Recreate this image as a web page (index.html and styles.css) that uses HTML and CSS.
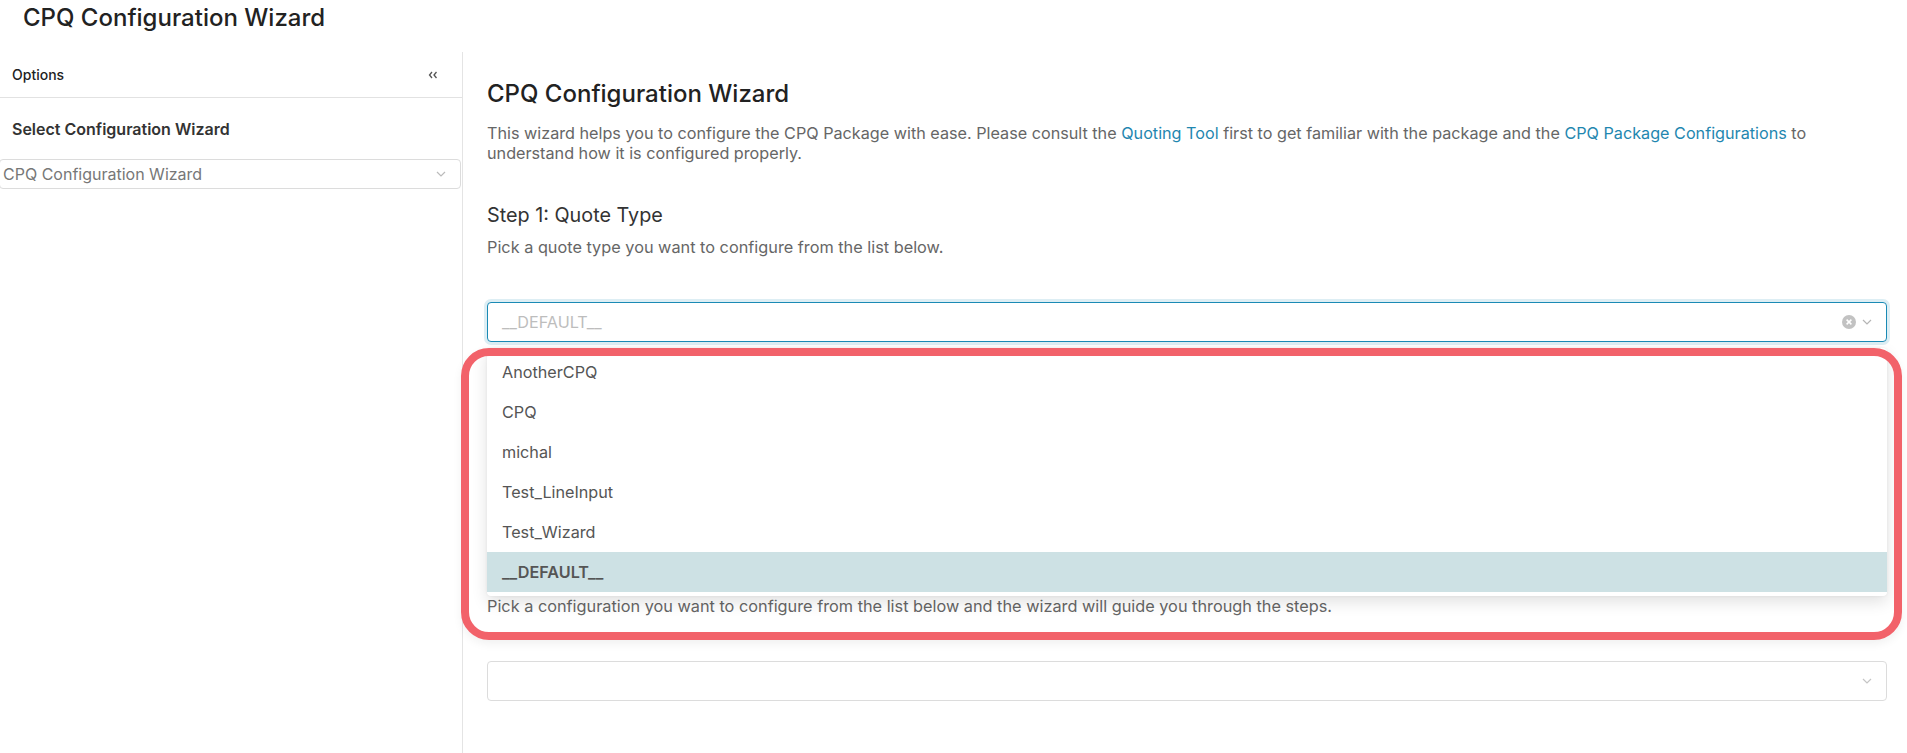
FILE: index.html
```html
<!DOCTYPE html>
<html lang="en">
<head>
<meta charset="utf-8">
<title>CPQ Configuration Wizard</title>
<link rel="stylesheet" href="styles.css">
</head>
<body>
<header class="page-title">CPQ Configuration Wizard</header>
<div class="layout">
  <aside class="sidebar">
    <div class="sidebar-header">
      <span class="sidebar-label">Options</span>
      <svg class="collapse" width="10" height="8" viewBox="0 0 10 8"><polyline points="4,1 1.5,4 4,7" fill="none" stroke="#555" stroke-width="1.3"/><polyline points="8.5,1 6,4 8.5,7" fill="none" stroke="#555" stroke-width="1.3"/></svg>
    </div>
    <div class="sidebar-title">Select Configuration Wizard</div>
    <div class="sidebar-select">
      <span>CPQ Configuration Wizard</span>
      <svg class="chev" width="10" height="6" viewBox="0 0 10 6"><polyline points="1,1 5,5 9,1" fill="none" stroke="#bbb" stroke-width="1.2"/></svg>
    </div>
  </aside>
  <main class="main">
    <h2 class="main-title">CPQ Configuration Wizard</h2>
    <p class="intro">This wizard helps you to configure the CPQ Package with ease. Please consult the <a class="link">Quoting Tool</a> first to get familiar with the package and the <a class="link">CPQ Package Configurations</a> to understand how it is configured properly.</p>

    <h3 class="step-title">Step 1: Quote Type</h3>
    <p class="step-desc">Pick a quote type you want to configure from the list below.</p>
    <div class="select-wrap">
      <div class="select focused">
        <span class="placeholder">__DEFAULT__</span>
        <span class="select-icons">
          <svg width="14" height="14" viewBox="0 0 14 14"><circle cx="7" cy="7" r="7" fill="#c2c2c2"/><path d="M4.6 4.6 L9.4 9.4 M9.4 4.6 L4.6 9.4" stroke="#fff" stroke-width="1.5"/></svg>
          <svg width="10" height="6" viewBox="0 0 10 6"><polyline points="1,1 5,5 9,1" fill="none" stroke="#b5b5b5" stroke-width="1.2"/></svg>
        </span>
      </div>
      <ul class="menu">
        <li class="menu-item">AnotherCPQ</li>
        <li class="menu-item">CPQ</li>
        <li class="menu-item">michal</li>
        <li class="menu-item">Test_LineInput</li>
        <li class="menu-item">Test_Wizard</li>
        <li class="menu-item selected">__DEFAULT__</li>
      </ul>
    </div>

    <p class="step-desc step-two">Pick a configuration you want to configure from the list below and the wizard will guide you through the steps.</p>
    <div class="select">
      <span class="placeholder"></span>
      <span class="select-icons">
        <svg width="10" height="6" viewBox="0 0 10 6"><polyline points="1,1 5,5 9,1" fill="none" stroke="#c5c5c5" stroke-width="1.2"/></svg>
      </span>
    </div>
  </main>
</div>
<div class="annotation"></div>
</body>
</html>
```
FILE: styles.css
```css
* { box-sizing: border-box; }
html, body { margin: 0; padding: 0; height: 100%; }
body {
  font-family: Inter, "Noto Sans", sans-serif;
  color: #333;
  background: #fff;
  overflow: hidden;
  position: relative;
}
.page-title {
  height: 52px;
  line-height: 36px;
  padding-left: 23px;
  font-size: 24px;
  font-weight: 500;
  color: #222;
}
.layout {
  display: flex;
  height: calc(100% - 52px);
}
.sidebar {
  width: 463px;
  flex: none;
  border-right: 1px solid #e4e4e4;
}
.sidebar-header {
  height: 46px;
  border-bottom: 1px solid #e2e2e2;
  display: flex;
  align-items: center;
  justify-content: space-between;
  padding: 0 24px 0 12px;
}
.sidebar-label {
  font-size: 14px;
  font-weight: 500;
  color: #222;
}
.sidebar-title {
  margin-top: 20px;
  padding-left: 12px;
  font-size: 16px;
  font-weight: 600;
  line-height: 22px;
  color: #333;
}
.sidebar-select {
  margin: 19px 1px 0 -1px;
  height: 30px;
  border: 1px solid #dcdcdc;
  border-radius: 4px;
  display: flex;
  align-items: center;
  justify-content: space-between;
  padding: 0 14px 0 3px;
  font-size: 16px;
  color: #777;
}
.main {
  flex: 1;
  padding: 0 20px 0 24px;
}
.main-title {
  margin: 27px 0 0;
  font-size: 24px;
  line-height: 30px;
  font-weight: 500;
  color: #222;
}
.intro {
  margin: 14px 0 0;
  font-size: 16.2px;
  line-height: 20px;
  color: #666;
}
.link { color: #1f87b0; text-decoration: none; }
.step-title {
  margin: 40px 0 0;
  font-size: 19.8px;
  line-height: 24px;
  font-weight: 400;
  color: #333;
}
.step-desc {
  margin: 10px 0 45px;
  font-size: 16.3px;
  line-height: 20px;
  color: #666;
}
.step-two { margin-top: 254px; }
.select-wrap { position: relative; }
.select {
  height: 40px;
  border: 1px solid #dcdcdc;
  border-radius: 4px;
  display: flex;
  align-items: center;
  justify-content: space-between;
  padding: 0 14px 0 14px;
  font-size: 16.2px;
  background: #fff;
}
.select.focused {
  border-color: #1a8ab5;
  box-shadow: 0 0 0 3px rgba(26, 138, 181, 0.15);
}
.placeholder { color: #bdbdbd; }
.select-icons {
  display: flex;
  align-items: center;
  gap: 6px;
}
.menu {
  position: absolute;
  left: 0;
  right: 0;
  top: calc(100% + 6px);
  margin: 0;
  padding: 4px 0;
  list-style: none;
  background: #fff;
  border-radius: 4px;
  box-shadow: 0 6px 16px rgba(0, 0, 0, 0.12), 0 0 3px rgba(0, 0, 0, 0.06);
  z-index: 5;
}
.menu-item {
  height: 40px;
  line-height: 40px;
  padding-left: 15px;
  font-size: 16.2px;
  color: #555;
}
.menu-item.selected {
  background: #cde1e4;
  font-weight: 600;
}
.annotation {
  position: absolute;
  left: 461px;
  top: 348px;
  width: 1441px;
  height: 292px;
  border: 8px solid #f2626a;
  border-radius: 28px;
  box-shadow: 0 4px 10px rgba(0, 0, 0, 0.06);
  z-index: 10;
  pointer-events: none;
}
```
